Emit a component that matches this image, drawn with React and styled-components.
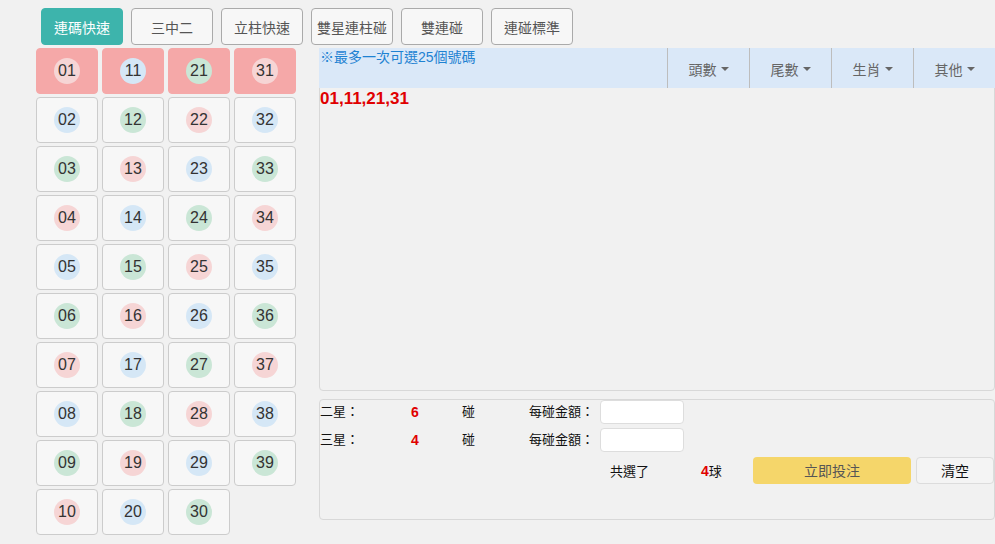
import styled, { createGlobalStyle } from 'styled-components';

const GlobalStyle = createGlobalStyle`
  html, body {
    margin: 0;
    padding: 0;
    background: #f1f1f1;
    font-family: "Liberation Sans", Arial, "Noto Sans CJK TC", sans-serif;
  }
`;

const tabs = ["連碼快速", "三中二", "立柱快速", "雙星連柱碰", "雙連碰", "連碰標準"];
const filters = ["頭數", "尾數", "生肖", "其他"];
const picked = [1, 11, 21, 31];

const ballColors = ["#f6d5d5", "#d5e7f6", "#cae6d6"];

const pad = (n) => (n < 10 ? "0" + n : "" + n);

const Page = styled.div`
  padding: 8px 0 0 36px;
  width: 959px;
  height: 536px;
`;

const Toolbar = styled.div`
  display: flex;
  gap: 8px;
  padding-left: 5px;
  margin-bottom: 3px;
`;

const Tab = styled.button`
  width: 82px;
  height: 37px;
  border-radius: 4px;
  border: 1px solid ${({ active }) => (active ? "#3db4ac" : "#aaa")};
  background: ${({ active }) => (active ? "#3db4ac" : "#f7f7f7")};
  color: ${({ active }) => (active ? "#fff" : "#555")};
  font-family: inherit;
  font-size: 14px;
  padding: 0;
  cursor: pointer;
`;

const Body = styled.div`
  display: flex;
  gap: 23px;
`;

const NumberGrid = styled.div`
  display: grid;
  grid-template-rows: repeat(10, 46px);
  grid-auto-columns: 62px;
  grid-auto-flow: column;
  column-gap: 4px;
  row-gap: 3px;
`;

const Cell = styled.div`
  box-sizing: border-box;
  border: 1px solid ${({ selected }) => (selected ? "#f5a8a8" : "#ccc")};
  border-radius: 4px;
  background: ${({ selected }) => (selected ? "#f5a8a8" : "#f7f7f7")};
  display: flex;
  align-items: center;
  justify-content: center;
  cursor: pointer;
`;

const Ball = styled.span`
  width: 26px;
  height: 26px;
  border-radius: 50%;
  background: ${({ color }) => color};
  color: #333;
  font-size: 16px;
  display: flex;
  align-items: center;
  justify-content: center;
`;

const Side = styled.div`
  width: 676px;
  display: flex;
  flex-direction: column;
  gap: 8px;
`;

const Panel = styled.div`
  box-sizing: border-box;
  border: 1px solid #d8d8d8;
  border-radius: 4px;
  height: ${({ h }) => h}px;
`;

const Header = styled.div`
  display: flex;
  height: 40px;
  background: #dae8f8;
  margin: -1px -1px 0;
`;

const Notice = styled.div`
  flex: 1;
  color: #1e82d2;
  font-size: 14px;
  line-height: 18px;
  padding-left: 1px;
`;

const Filter = styled.div`
  width: 81px;
  border-left: 1px solid #bdbdbd;
  display: flex;
  align-items: center;
  justify-content: center;
  gap: 4px;
  color: #666;
  font-size: 14px;
  padding-top: 1px;
  cursor: pointer;
`;

const Caret = styled.span`
  width: 0;
  height: 0;
  border-left: 4.5px solid transparent;
  border-right: 4.5px solid transparent;
  border-top: 4px solid #666;
`;

const Picked = styled.div`
  color: #e00000;
  font-weight: bold;
  font-size: 17px;
  padding-top: 1px;
`;

const BetRow = styled.div`
  display: grid;
  grid-template-columns: 91px 51px 67px 71px 84px;
  align-items: start;
  height: 28px;
  line-height: 24px;
  font-size: 13px;
  color: #111;
`;

const Count = styled.span`
  color: #e00000;
  font-weight: bold;
  font-size: 14px;
`;

const Amount = styled.input`
  box-sizing: border-box;
  width: 84px;
  height: 24px;
  border: 1px solid #ddd;
  border-radius: 4px;
  background: #fff;
  outline: none;
`;

const Summary = styled.div`
  display: flex;
  align-items: center;
  height: 28px;
  padding-left: 290px;
  font-size: 13px;
  color: #111;
`;

const SummaryText = styled.span`
  width: ${({ w }) => w}px;
`;

const Submit = styled.button`
  width: 158px;
  height: 27px;
  border: none;
  border-radius: 4px;
  background: #f5d66a;
  color: #555;
  font-family: inherit;
  font-size: 14px;
  margin-right: 5px;
  cursor: pointer;
`;

const Clear = styled.button`
  width: 78px;
  height: 27px;
  box-sizing: border-box;
  border: 1px solid #dcdcdc;
  border-radius: 4px;
  background: #f4f4f4;
  color: #111;
  font-family: inherit;
  font-size: 14px;
  cursor: pointer;
`;

function App() {
  const numbers = Array.from({ length: 39 }, (_, i) => i + 1);

  return (
    <>
      <GlobalStyle />
      <Page>
        <Toolbar>
          {tabs.map((t, i) => (
            <Tab key={t} active={i === 0}>{t}</Tab>
          ))}
        </Toolbar>
        <Body>
          <NumberGrid>
            {numbers.map((n) => (
              <Cell key={n} selected={picked.includes(n)}>
                <Ball color={ballColors[(n - 1) % 3]}>{pad(n)}</Ball>
              </Cell>
            ))}
          </NumberGrid>
          <Side>
            <Panel h={343}>
              <Header>
                <Notice>※最多一次可選25個號碼</Notice>
                {filters.map((f) => (
                  <Filter key={f}>
                    {f}
                    <Caret />
                  </Filter>
                ))}
              </Header>
              <Picked>{picked.map(pad).join(",")}</Picked>
            </Panel>
            <Panel h={121}>
              <BetRow>
                <span>二星：</span>
                <Count>6</Count>
                <span>碰</span>
                <span>每碰金額：</span>
                <Amount />
              </BetRow>
              <BetRow>
                <span>三星：</span>
                <Count>4</Count>
                <span>碰</span>
                <span>每碰金額：</span>
                <Amount />
              </BetRow>
              <Summary>
                <SummaryText w={91}>共選了</SummaryText>
                <SummaryText w={52}>
                  <Count>4</Count>球
                </SummaryText>
                <Submit>立即投注</Submit>
                <Clear>清空</Clear>
              </Summary>
            </Panel>
          </Side>
        </Body>
      </Page>
    </>
  );
}

export default App;
